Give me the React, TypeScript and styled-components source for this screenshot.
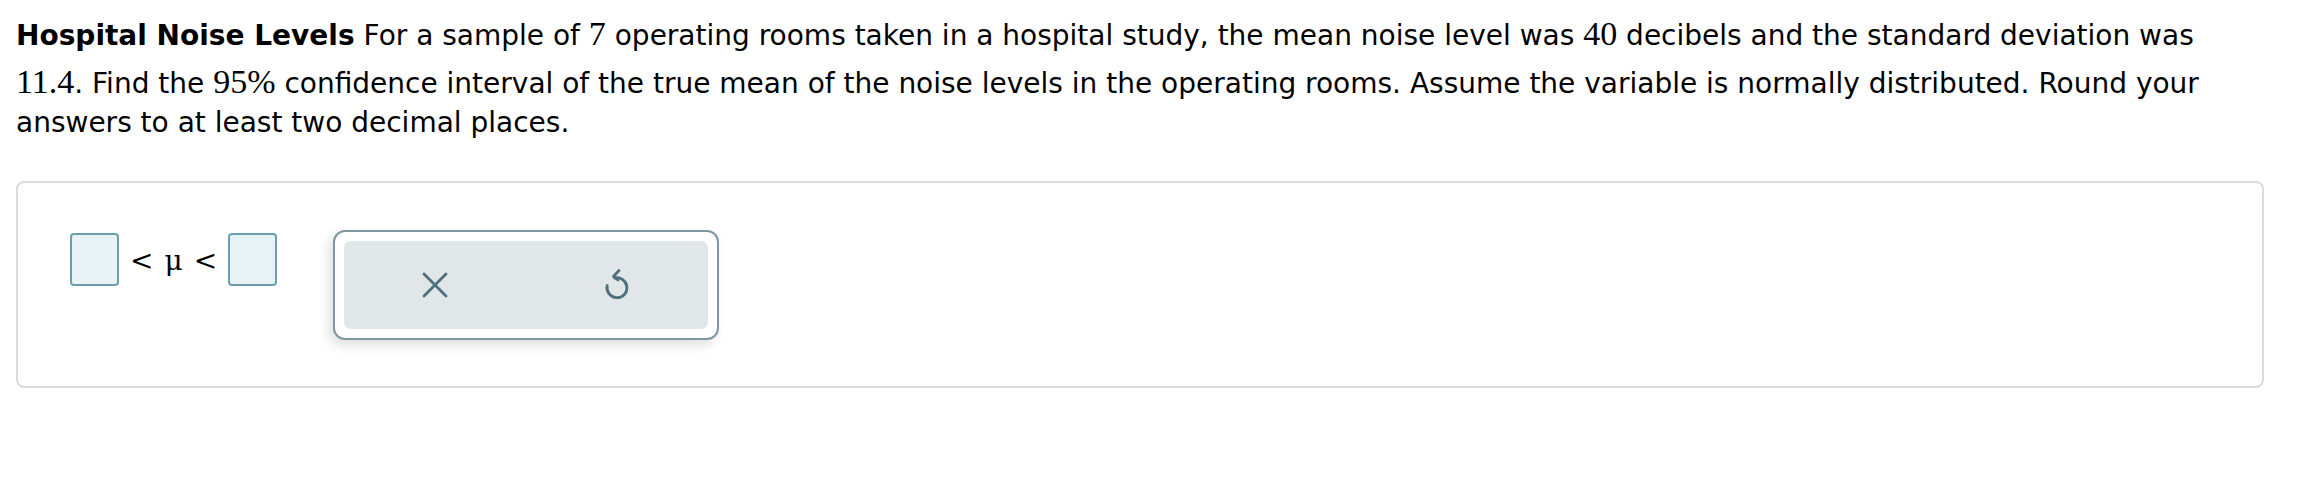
import React from "react";
import styled, { createGlobalStyle } from "styled-components";

const GlobalStyle = createGlobalStyle`
  html, body {
    margin: 0;
    padding: 0;
    background: #fff;
  }
  body {
    font-family: "DejaVu Sans", Verdana, sans-serif;
    color: #000;
  }
`;

const Page = styled.div`
  width: 2248px;
  padding: 14px 0 0 16px;
`;

const Question = styled.p`
  max-width: 2215px;
  margin: 0 0 39px 0;
  font-size: 28px;
  line-height: 39px;
  .title {
    font-weight: bold;
  }
`;

const Num = styled.span<{ $lift?: boolean }>`
  font-family: "Liberation Serif", "Times New Roman", serif;
  font-size: 34px;
  ${props => props.$lift ? `
    display: inline-block;
    margin-top: 7px;
  ` : ""}
`;

const Card = styled.div`
  border: 2px solid #d6dce0;
  border-radius: 8px;
  padding: 47px 52px 46px;
  display: flex;
  align-items: flex-start;
`;

const Inequality = styled.div`
  display: flex;
  align-items: center;
  margin-top: 3px;
  gap: 11px;
  font-family: "DejaVu Serif", "Liberation Serif", serif;
  font-size: 28px;
  .sym {
    line-height: 1;
    padding-top: 3px;
  }
`;

const AnswerBox = styled.div`
  width: 45px;
  height: 49px;
  border: 2px solid #6a9fae;
  border-radius: 4px;
  background: #e8f3f5;
`;

const ToolGroup = styled.div`
  margin-left: 56px;
  width: 364px;
  padding: 9px;
  border: 2px solid #7e97a1;
  border-radius: 12px;
  background: #fff;
  box-shadow: -4px 5px 12px rgba(0, 0, 0, 0.13);
`;

const ToolInner = styled.div`
  display: flex;
  height: 88px;
  border-radius: 7px;
  background: #e1e6e9;
`;

const ToolButton = styled.button`
  flex: 1;
  display: flex;
  align-items: center;
  justify-content: center;
  background: transparent;
  border: none;
  padding: 0;
  color: #4d6f7c;
  cursor: pointer;
`;

const ClearIcon = () => (
  <svg width="26" height="26" viewBox="0 0 26 26" fill="none">
    <path d="M2 2 L24 24 M24 2 L2 24" stroke="currentColor" strokeWidth="2.8" strokeLinecap="round" />
  </svg>
);

const UndoIcon = () => (
  <svg width="30" height="36" viewBox="0 0 30 36" fill="none">
    <path
      d="M12.5 11 A10 10 0 1 1 5.2 18.5"
      stroke="currentColor"
      strokeWidth="2.8"
      strokeLinecap="round"
    />
    <path
      d="M17 3.5 L11.5 9.5 L16 13"
      stroke="currentColor"
      strokeWidth="2.8"
      strokeLinecap="round"
      strokeLinejoin="round"
    />
  </svg>
);

export default function App() {
  return (
    <>
      <GlobalStyle />
      <Page>
        <Question>
          <span className="title">Hospital Noise Levels</span> For a sample of <Num>7</Num> operating
          rooms taken in a hospital study, the mean noise level was <Num>40</Num> decibels and the
          standard deviation was <Num $lift>11.4</Num>. Find the <Num>95%</Num> confidence interval
          of the true mean of the noise levels in the operating rooms. Assume the variable is
          normally distributed. Round your answers to at least two decimal places.
        </Question>
        <Card>
          <Inequality>
            <AnswerBox />
            <span className="sym">&lt;</span>
            <span className="sym">μ</span>
            <span className="sym">&lt;</span>
            <AnswerBox />
          </Inequality>
          <ToolGroup>
            <ToolInner>
              <ToolButton aria-label="Clear">
                <ClearIcon />
              </ToolButton>
              <ToolButton aria-label="Undo">
                <UndoIcon />
              </ToolButton>
            </ToolInner>
          </ToolGroup>
        </Card>
      </Page>
    </>
  );
}
